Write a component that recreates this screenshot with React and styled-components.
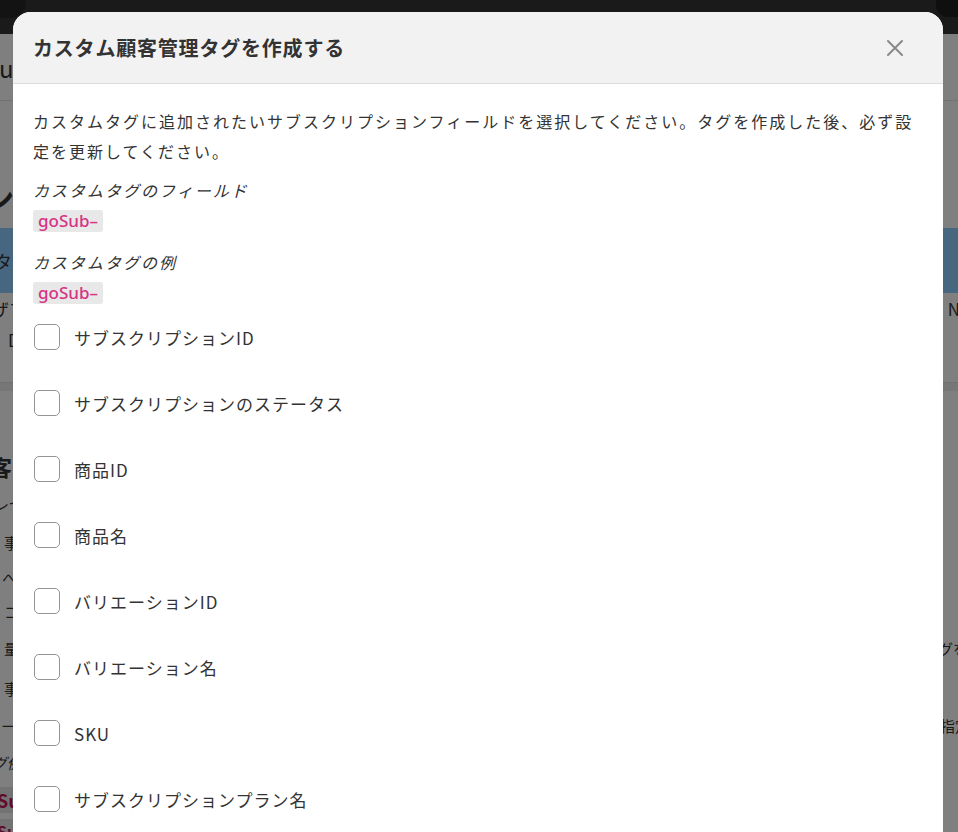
import React from "react";
import styled, { createGlobalStyle } from "styled-components";

const GlobalStyle = createGlobalStyle`
  html, body {
    margin: 0;
    padding: 0;
    height: 100%;
    overflow: hidden;
  }
  body {
    font-family: "Noto Sans", "Noto Sans CJK JP", sans-serif;
    background: #fff;
  }
`;

const jp = `"Noto Sans CJK JP", "Noto Sans", sans-serif`;

// ---------- page behind the dialog ----------

const Page = styled.div`
  position: relative;
  height: 100vh;
  overflow: hidden;
  background: #fff;
  color: #333;
  font-family: ${jp};
`;

const TopBar = styled.div`
  height: 34px;
  background: #343434;
  display: flex;
  justify-content: space-between;
  align-items: flex-start;
`;

const SearchPill = styled.div`
  width: 44px;
  height: 18px;
  margin-left: -18px;
  background: #262626;
  border-radius: 0 0 16px 0;
`;

const BarButton = styled.div`
  width: 30px;
  height: 17px;
  margin-right: -8px;
  background: #1f1f1f;
  border-radius: 0 0 0 12px;
`;

const BgRow = styled.div`
  height: ${({ $h }) => $h}px;
  display: flex;
  justify-content: space-between;
  align-items: center;
  background: ${({ $bg }) => $bg || "transparent"};
  border-bottom: ${({ $line }) => ($line ? "1px solid #e4e4e4" : "none")};
  box-sizing: border-box;
`;

const BgText = styled.span`
  font-size: ${({ $size }) => $size || 16}px;
  font-weight: ${({ $bold }) => ($bold ? 700 : 400)};
  font-style: ${({ $italic }) => ($italic ? "italic" : "normal")};
  color: ${({ $pink }) => ($pink ? "#c2185b" : "#333")};
  background: ${({ $pink }) => ($pink ? "#e6e6e6" : "transparent")};
  margin-left: ${({ $shift }) => $shift || 0}px;
  margin-right: ${({ $rshift }) => $rshift || 0}px;
  white-space: nowrap;
`;

const Separator = styled.div`
  height: 8px;
  background: #eeeeee;
  border-top: 1px solid #e0e0e0;
`;

const Overlay = styled.div`
  position: absolute;
  inset: 0;
  background: rgba(0, 0, 0, 0.5);
`;

// ---------- dialog ----------

const Modal = styled.div`
  position: absolute;
  top: 12px;
  left: 13px;
  width: 930px;
  height: 880px;
  background: #fff;
  border-radius: 18px 18px 0 0;
  overflow: hidden;
  display: flex;
  flex-direction: column;
  font-family: ${jp};
  color: #333;
`;

const Header = styled.div`
  height: 72px;
  box-sizing: border-box;
  flex-shrink: 0;
  padding: 0 40px 0 20px;
  background: #f2f2f2;
  border-bottom: 1px solid #dcdcdc;
  display: flex;
  align-items: center;
  justify-content: space-between;
`;

const Title = styled.h2`
  margin: 0;
  font-size: 20px;
  font-weight: 700;
  letter-spacing: 0.8px;
  color: #333;
`;

const CloseButton = styled.button`
  width: 16px;
  height: 16px;
  padding: 0;
  border: none;
  background: transparent;
  cursor: pointer;
  display: flex;
`;

const Body = styled.div`
  padding: 22px 20px 0 20px;
`;

const Intro = styled.p`
  margin: 0;
  font-size: 16px;
  letter-spacing: 2px;
  line-height: 30px;
  color: #333;
`;

const Field = styled.div`
  display: flex;
  flex-direction: column;
  align-items: flex-start;
  margin-top: ${({ $first }) => ($first ? 9 : 15)}px;
`;

const FieldLabel = styled.div`
  font-size: 16px;
  letter-spacing: 2px;
  line-height: 30px;
  font-style: italic;
  color: #333;
`;

const Chip = styled.code`
  margin-top: 5px;
  height: 22px;
  line-height: 22px;
  padding: 0 5px;
  background: #e8e8e8;
  border-radius: 3px;
  color: #d63384;
  font-family: "Noto Sans", sans-serif;
  font-size: 17px;
  font-weight: 500;
`;

const OptionList = styled.div`
  display: flex;
  flex-direction: column;
`;

const Option = styled.label`
  height: 66px;
  display: flex;
  align-items: center;
  gap: 14px;
  padding-left: 1px;
  cursor: pointer;
`;

const Box = styled.span`
  width: 26px;
  height: 26px;
  box-sizing: border-box;
  border: 1px solid #949494;
  border-radius: 5px;
  background: #fff;
  flex-shrink: 0;
`;

const OptionText = styled.span`
  font-size: 17px;
  letter-spacing: 1px;
  color: #333;
`;

const options = [
  "サブスクリプションID",
  "サブスクリプションのステータス",
  "商品ID",
  "商品名",
  "バリエーションID",
  "バリエーション名",
  "SKU",
  "サブスクリプションプラン名",
];

const CloseIcon = () => (
  <svg width="16" height="16" viewBox="0 0 16 16">
    <path d="M1 1 L15 15 M15 1 L1 15" stroke="#8a8a8a" strokeWidth="2" strokeLinecap="round" />
  </svg>
);

const Background = () => (
  <>
    <TopBar>
      <SearchPill />
      <BarButton />
    </TopBar>
    <BgRow $h={67} $line>
      <BgText $size={24} $shift={-1}>ul</BgText>
    </BgRow>
    <BgRow $h={70} />
    <BgRow $h={50}>
      <BgText $size={30} $bold $shift={-16}>ン</BgText>
    </BgRow>
    <BgRow $h={7} />
    <BgRow $h={65} $bg="#8fcdff">
      <BgText $size={18} $shift={-6}>タ</BgText>
    </BgRow>
    <BgRow $h={31}>
      <BgText $size={17} $shift={-8}>ザブ</BgText>
      <BgText $size={17} $rshift={-12}>NE</BgText>
    </BgRow>
    <BgRow $h={30}>
      <BgText $size={17} $shift={8}>D</BgText>
    </BgRow>
    <BgRow $h={28} />
    <Separator />
    <BgRow $h={57} />
    <BgRow $h={35}>
      <BgText $size={22} $bold $shift={-10}>客</BgText>
    </BgRow>
    <BgRow $h={40}>
      <BgText $size={15} $shift={-6}>レセ</BgText>
    </BgRow>
    <BgRow $h={38}>
      <BgText $size={15} $shift={4}>事</BgText>
    </BgRow>
    <BgRow $h={33}>
      <BgText $size={15} $shift={2}>へ</BgText>
    </BgRow>
    <BgRow $h={35}>
      <BgText $size={15} $shift={4}>コ</BgText>
    </BgRow>
    <BgRow $h={39}>
      <BgText $size={15} $shift={4}>量</BgText>
      <BgText $size={15} $rshift={-10}>グを</BgText>
    </BgRow>
    <BgRow $h={40}>
      <BgText $size={15} $shift={4}>事</BgText>
    </BgRow>
    <BgRow $h={35}>
      <BgText $size={15} $shift={2}>一</BgText>
      <BgText $size={15} $rshift={-12}>指定</BgText>
    </BgRow>
    <BgRow $h={39}>
      <BgText $size={15} $italic $shift={-8}>グ例</BgText>
    </BgRow>
    <BgRow $h={35}>
      <BgText $size={18} $bold $pink $shift={-3}>Su</BgText>
    </BgRow>
    <BgRow $h={27}>
      <BgText $size={16} $bold $pink $shift={-3}>Su</BgText>
    </BgRow>
  </>
);

const App = () => {
  return (
    <Page>
      <GlobalStyle />
      <Background />
      <Overlay />
      <Modal role="dialog" aria-modal="true">
        <Header>
          <Title>カスタム顧客管理タグを作成する</Title>
          <CloseButton aria-label="閉じる">
            <CloseIcon />
          </CloseButton>
        </Header>
        <Body>
          <Intro>
            カスタムタグに追加されたいサブスクリプションフィールドを選択してください。タグを作成した後、必ず設定を更新してください。
          </Intro>
          <Field $first>
            <FieldLabel>カスタムタグのフィールド</FieldLabel>
            <Chip>goSub–</Chip>
          </Field>
          <Field>
            <FieldLabel>カスタムタグの例</FieldLabel>
            <Chip>goSub–</Chip>
          </Field>
          <OptionList>
            {options.map((name) => (
              <Option key={name}>
                <Box />
                <OptionText>{name}</OptionText>
              </Option>
            ))}
          </OptionList>
        </Body>
      </Modal>
    </Page>
  );
};

export default App;
